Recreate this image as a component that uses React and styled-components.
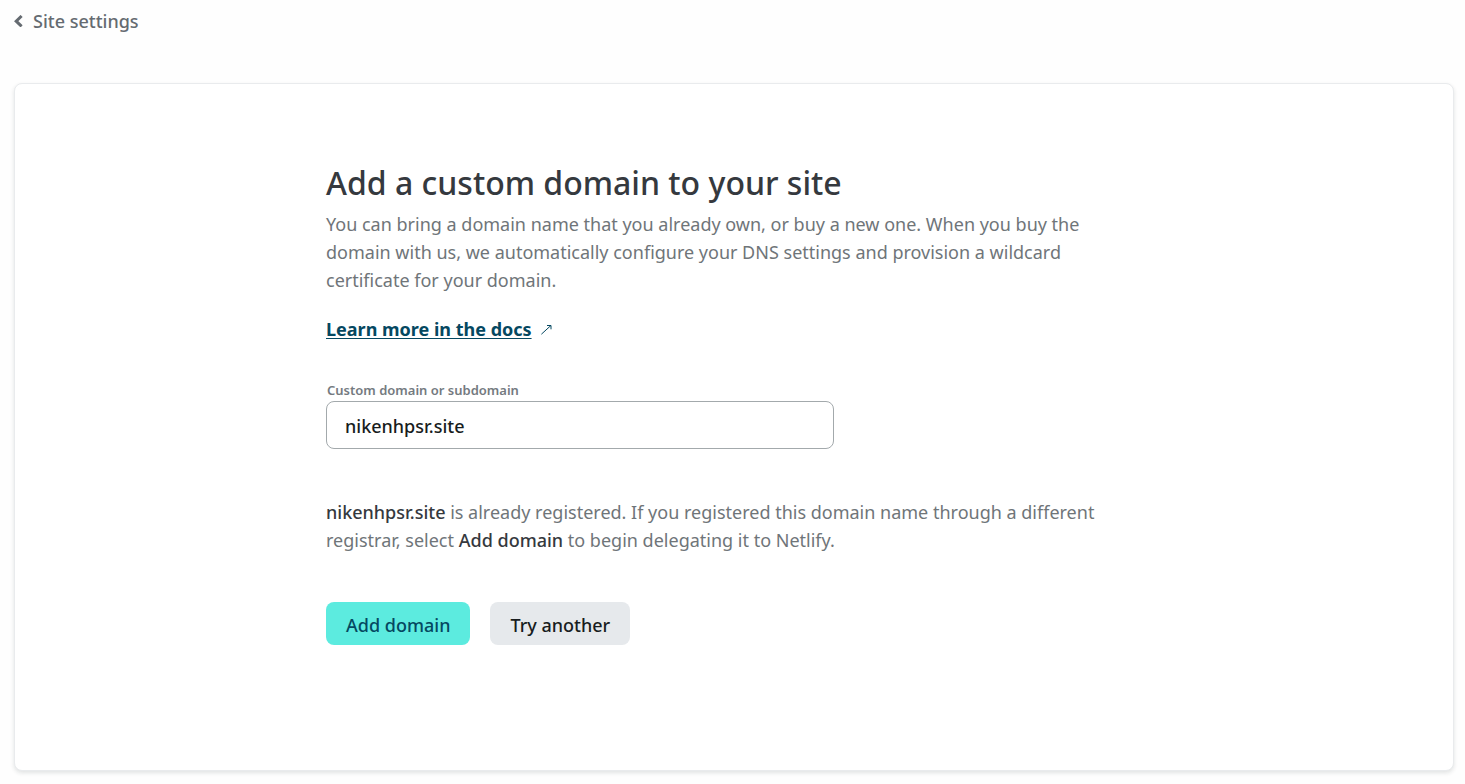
import React, { useState } from "react";
import styled, { createGlobalStyle } from "styled-components";

const GlobalStyle = createGlobalStyle`
  *, *::before, *::after { box-sizing: border-box; }
  body {
    margin: 0;
    background: #fefefe;
    color: #6f7579;
    font-family: "Segoe UI", "Noto Sans", sans-serif;
    font-size: 18px;
    line-height: 28px;
  }
`;

const Page = styled.div`
  display: flex;
  flex-direction: column;
  gap: 48px;
  min-height: 100vh;
  padding: 7px 11px 13px 14px;
`;

const BackLink = styled.a`
  display: flex;
  align-items: center;
  align-self: flex-start;
  gap: 10px;
  color: #656b71;
  font-weight: 500;
  text-decoration: none;
`;

const Card = styled.main`
  flex: 1;
  padding: 79px 24px;
  background: #fff;
  border: 1px solid #e9ebed;
  border-radius: 8px;
  box-shadow: 0 2px 4px rgba(14, 30, 37, 0.12);
`;

const Content = styled.div`
  max-width: 816px;
  margin: 0 auto;
`;

const Title = styled.h1`
  margin: 0;
  color: #35393e;
  font-size: 32px;
  font-weight: 500;
  line-height: 39px;
`;

const Text = styled.p`
  margin: ${({ $top }) => $top}px 0 0;
`;

const Strong = styled.strong`
  color: #35393e;
  font-weight: 500;
`;

const DocsLink = styled.a`
  display: inline-flex;
  align-items: center;
  gap: 9px;
  margin-top: 21px;
  color: #054861;
  font-weight: 700;
  text-decoration: none;

  span {
    text-decoration: underline;
    text-decoration-thickness: 1px;
    text-underline-offset: 2px;
  }
`;

const Field = styled.div`
  display: flex;
  flex-direction: column;
  max-width: 508px;
  margin-top: 36px;
`;

const Label = styled.label`
  padding-left: 1px;
  color: #747a80;
  font-size: 13px;
  font-weight: 600;
  line-height: 22px;
`;

const Input = styled.input`
  width: 100%;
  height: 48px;
  padding: 2px 18px 0;
  background: #fff;
  border: 1px solid #a3a9ac;
  border-radius: 8px;
  color: #181c20;
  font: inherit;
  font-weight: 500;
`;

const Actions = styled.div`
  display: flex;
  flex-wrap: wrap;
  gap: 20px;
  margin-top: 48px;
`;

const Button = styled.button`
  height: 43px;
  padding: 3px 20px 0;
  border: 0;
  border-radius: 8px;
  background: ${({ $primary }) => ($primary ? "#5cebdf" : "#e6e9ec")};
  color: ${({ $primary }) => ($primary ? "#054861" : "#181c20")};
  font: inherit;
  font-weight: 500;
  cursor: pointer;
`;

const ChevronIcon = () => (
  <svg width="9" height="12" viewBox="0 0 9 12" fill="none" aria-hidden="true">
    <path d="M7.6 1L2.2 6.2l5.4 5.2" stroke="currentColor" strokeWidth="3" />
  </svg>
);

const ArrowIcon = () => (
  <svg width="11" height="11" viewBox="0 0 11 11" fill="none" aria-hidden="true">
    <path d="M.4 10.2L10 1.4M6 1.5h4v3.8" stroke="currentColor" />
  </svg>
);

export default function App() {
  const [domain, setDomain] = useState("nikenhpsr.site");
  return (
    <>
      <GlobalStyle />
      <Page>
        <BackLink href="#settings">
          <ChevronIcon />
          Site settings
        </BackLink>
        <Card>
          <Content>
            <Title>Add a custom domain to your site</Title>
            <Text $top={8}>
              You can bring a domain name that you already own, or buy a new one. When you buy the
              domain with us, we automatically configure your DNS settings and provision a wildcard
              certificate for your domain.
            </Text>
            <DocsLink href="#docs">
              <span>Learn more in the docs</span>
              <ArrowIcon />
            </DocsLink>
            <Field>
              <Label htmlFor="domain">Custom domain or subdomain</Label>
              <Input id="domain" value={domain} onChange={(e) => setDomain(e.target.value)} />
            </Field>
            <Text $top={49}>
              <Strong>nikenhpsr.site</Strong> is already registered. If you registered this domain
              name through a different registrar, select <Strong>Add domain</Strong> to begin
              delegating it to Netlify.
            </Text>
            <Actions>
              <Button type="button" $primary>Add domain</Button>
              <Button type="button">Try another</Button>
            </Actions>
          </Content>
        </Card>
      </Page>
    </>
  );
}
